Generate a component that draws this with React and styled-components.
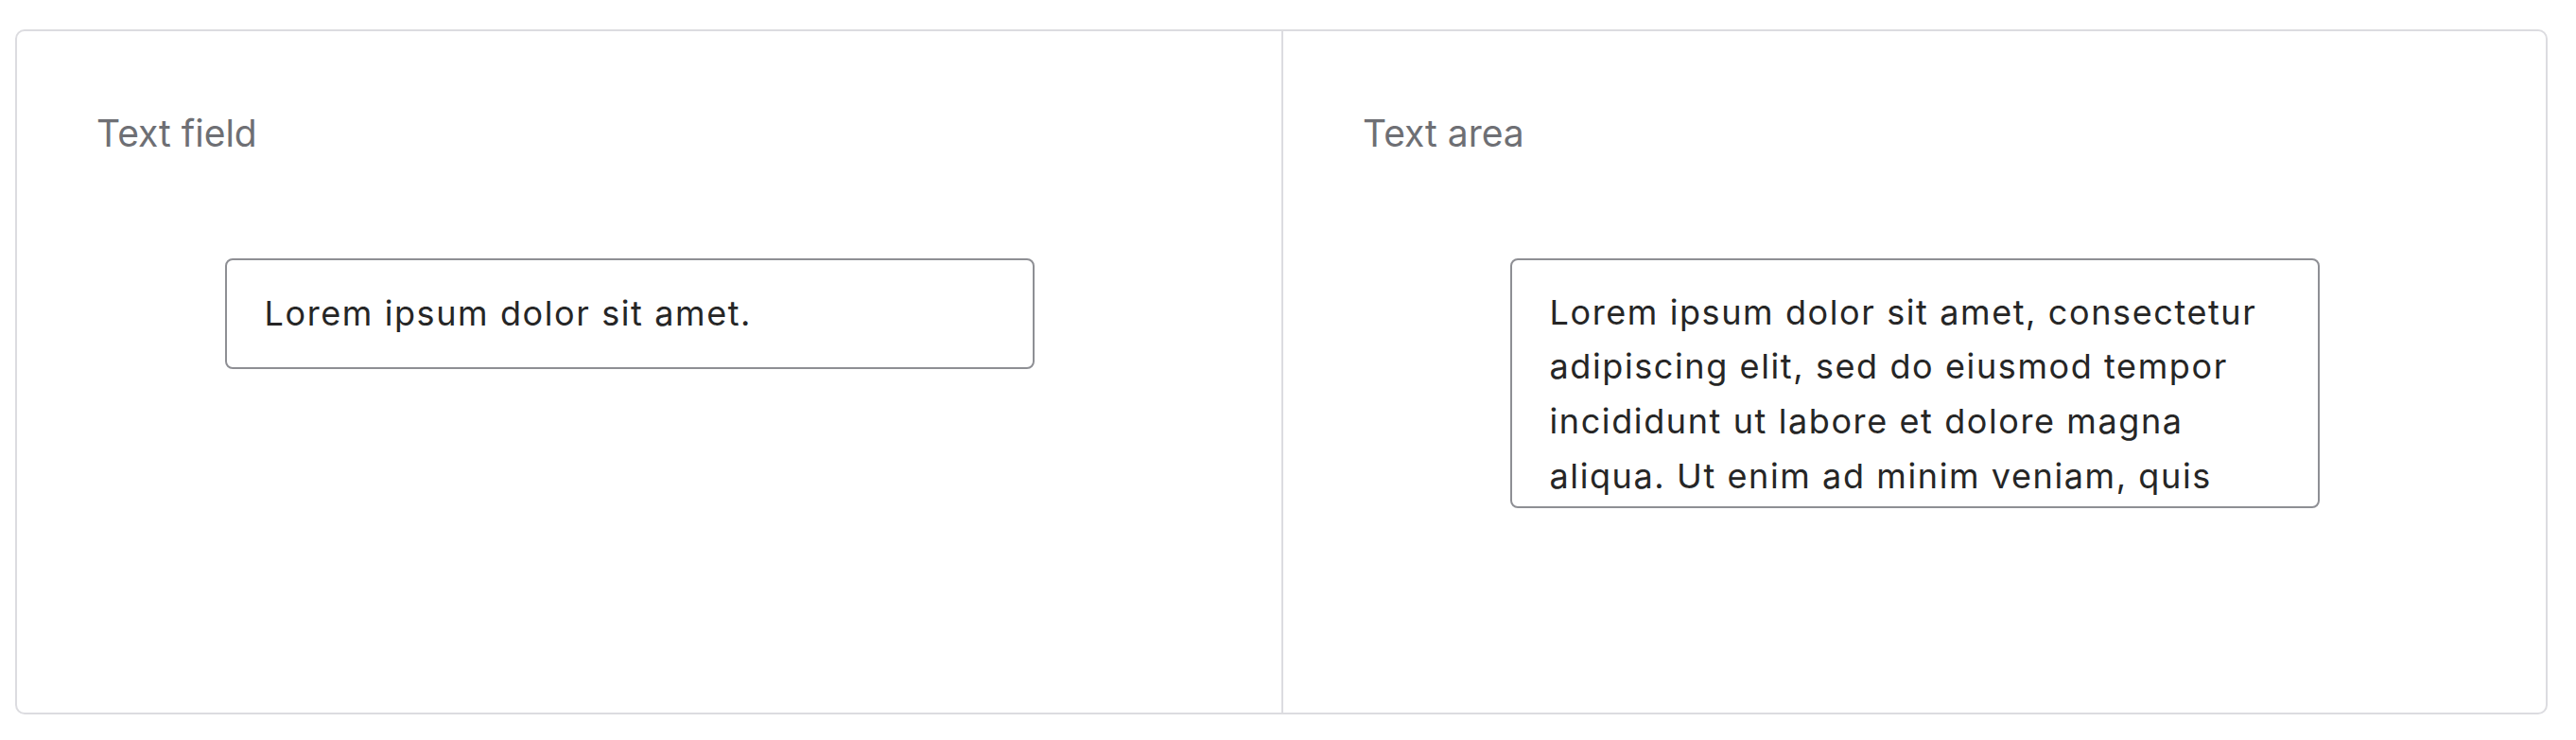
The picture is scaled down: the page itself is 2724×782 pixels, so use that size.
import React from 'react';
import styled, { createGlobalStyle } from 'styled-components';

const GlobalStyle = createGlobalStyle`
    html, body {
        margin: 0;
        padding: 0;
        background: #ffffff;
    }
    body {
        font-family: Inter, "Noto Sans", sans-serif;
    }
`;

const Page = styled.div`
    padding: 31px 30px 0 16px;
`;

const Card = styled.div`
    display: grid;
    grid-template-columns: 1fr 1fr;
    height: 724px;
    box-sizing: border-box;
    border: 2px solid #dcdce0;
    border-radius: 10px;
    background: #ffffff;
`;

const Panel = styled.section`
    display: flex;
    flex-direction: column;
    padding: 85px 84px 0;
    border-left: ${({ divided }) => (divided ? '2px solid #dcdce0' : 'none')};
    min-width: 0;
`;

const Label = styled.div`
    font-size: 39px;
    line-height: 1.2;
    font-weight: 400;
    color: #6e6f74;
`;

const Stage = styled.div`
    display: flex;
    justify-content: center;
    margin: 108px -84px 0;
    padding-right: ${({ shift }) => shift || 0}px;
`;

const Field = styled.input`
    width: 856px;
    height: 117px;
    box-sizing: border-box;
    padding: 0 40px;
    border: 2px solid #8e8f94;
    border-radius: 8px;
    font-family: Inter, "Noto Sans", sans-serif;
    font-size: 36px;
    letter-spacing: 1.6px;
    color: #262626;
    background: #ffffff;
    outline: none;
`;

const Area = styled.textarea`
    display: block;
    width: 856px;
    height: 264px;
    box-sizing: border-box;
    padding: 27px 40px;
    border: 2px solid #8e8f94;
    border-radius: 8px;
    font-family: Inter, "Noto Sans", sans-serif;
    font-size: 36px;
    letter-spacing: 1.6px;
    line-height: 1.6;
    color: #262626;
    background: #ffffff;
    resize: none;
    overflow: hidden;
    outline: none;
`;

const lorem =
    'Lorem ipsum dolor sit amet, consectetur adipiscing elit, sed do eiusmod tempor incididunt ut labore et dolore magna aliqua. Ut enim ad minim veniam, quis nostrud exercitation ullamco laboris nisi ut aliquip ex ea commodo consequat.';

export default function App() {
    return (
        <Page>
            <GlobalStyle />
            <Card>
                <Panel>
                    <Label>Text field</Label>
                    <Stage shift={42}>
                        <Field type="text" defaultValue="Lorem ipsum dolor sit amet." />
                    </Stage>
                </Panel>
                <Panel divided>
                    <Label>Text area</Label>
                    <Stage>
                        <Area defaultValue={lorem} />
                    </Stage>
                </Panel>
            </Card>
        </Page>
    );
}
